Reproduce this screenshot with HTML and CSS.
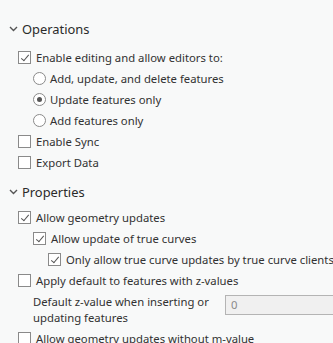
FILE: index.html
```html
<!DOCTYPE html>
<html>
<head>
<meta charset="utf-8">
<link rel="stylesheet" href="styles.css">
</head>
<body>
<div class="panel">
  <div class="section-head">
    <svg class="chev" width="9" height="6" viewBox="0 0 9 6"><path d="M1 1 L4.5 4.5 L8 1" fill="none" stroke="#555" stroke-width="1.4"/></svg>
    <span>Operations</span>
  </div>
  <div class="row lvl1"><span class="cb checked"></span><span>Enable editing and allow editors to:</span></div>
  <div class="row lvl2"><span class="rb"></span><span>Add, update, and delete features</span></div>
  <div class="row lvl2"><span class="rb on"></span><span>Update features only</span></div>
  <div class="row lvl2"><span class="rb"></span><span>Add features only</span></div>
  <div class="row lvl1"><span class="cb"></span><span>Enable Sync</span></div>
  <div class="row lvl1"><span class="cb"></span><span>Export Data</span></div>

  <div class="section-head second">
    <svg class="chev" width="9" height="6" viewBox="0 0 9 6"><path d="M1 1 L4.5 4.5 L8 1" fill="none" stroke="#555" stroke-width="1.4"/></svg>
    <span>Properties</span>
  </div>
  <div class="row lvl1"><span class="cb checked"></span><span>Allow geometry updates</span></div>
  <div class="row lvl2"><span class="cb checked"></span><span>Allow update of true curves</span></div>
  <div class="row lvl3"><span class="cb checked"></span><span>Only allow true curve updates by true curve clients</span></div>
  <div class="row lvl1"><span class="cb"></span><span>Apply default to features with z-values</span></div>
  <div class="zrow">
    <div class="zlabel">Default z-value when inserting or updating features</div>
    <div class="zinput">0</div>
  </div>
  <div class="row lvl1"><span class="cb"></span><span>Allow geometry updates without m-value</span></div>
</div>
</body>
</html>
```
FILE: styles.css
```css
html, body {
  margin: 0;
  padding: 0;
  background: #f8f9f9;
}
body {
  width: 333px;
  height: 343px;
  overflow: hidden;
  font-family: "Noto Sans", "Open Sans", sans-serif;
  font-size: 11.3px;
  color: #323232;
}
.panel {
  padding-top: 19px;
}
.section-head {
  display: flex;
  align-items: center;
  height: 20px;
  padding-left: 9px;
  font-size: 12.9px;
  color: #2b2b2b;
  margin-bottom: 8px;
}
.section-head.second {
  margin-top: 9px;
  margin-bottom: 5px;
}
.chev {
  margin-right: 4px;
}
.row {
  display: flex;
  align-items: center;
  height: 21px;
  white-space: nowrap;
}
.lvl1 { padding-left: 18px; }
.lvl2 { padding-left: 33px; }
.lvl3 { padding-left: 48px; }
.cb {
  flex: none;
  width: 11px;
  height: 11px;
  border: 1px solid #8a8a8a;
  background: #fff;
  margin-right: 5px;
  position: relative;
}
.cb.checked::after {
  content: "";
  position: absolute;
  left: 3.5px;
  top: 0.5px;
  width: 3px;
  height: 7px;
  border: solid #555;
  border-width: 0 1.4px 1.4px 0;
  transform: rotate(40deg);
}
.rb {
  flex: none;
  width: 11px;
  height: 11px;
  border: 1px solid #8a8a8a;
  border-radius: 50%;
  background: #fff;
  margin-right: 4px;
  position: relative;
}
.rb.on::after {
  content: "";
  position: absolute;
  left: 3px;
  top: 3px;
  width: 5px;
  height: 5px;
  border-radius: 50%;
  background: #555;
}
.zrow {
  display: flex;
  align-items: flex-start;
  padding-left: 33px;
  padding-top: 3px;
  height: 34px;
}
.zlabel {
  flex: none;
  width: 190px;
  line-height: 16px;
}
.zinput {
  margin-left: 2px;
  margin-top: 1px;
  flex: none;
  width: 120px;
  height: 20px;
  border: 1px solid #b4b4b4;
  background: #f0f0f0;
  color: #8a8a8a;
  box-sizing: border-box;
  padding-left: 5px;
  line-height: 18px;
}
```
